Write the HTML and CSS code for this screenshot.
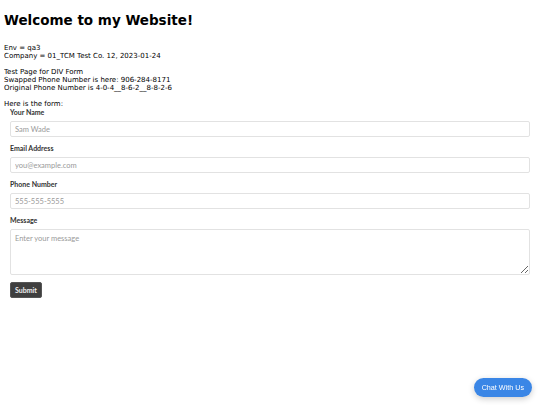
FILE: index.html
```html
<!DOCTYPE html>
<html lang="en">
  <head>
    <meta charset="UTF-8" />
    <meta name="viewport" content="width=device-width, initial-scale=1.0" />
    <title>Welcome</title>
    <link rel="stylesheet" href="styles.css">
  </head>
  <body>
    <h1>Welcome to my Website!</h1>

    <p>
      Env = qa3<br />
      Company = 01_TCM Test Co. 12, 2023-01-24
    </p>

    <p>
      Test Page for DIV Form<br />
      Swapped Phone Number is here: 906-284-8171<br />
      Original Phone Number is 4-0-4__8-6-2__8-8-2-6
    </p>

    <p class="intro">Here is the form:</p>

    <!-- Contact Form -->
    <div class="contact-form">
      <div class="form-group">
        <label for="name">Your Name</label>
        <input type="text" id="name" placeholder="Sam Wade" />
      </div>

      <div class="form-group">
        <label for="email">Email Address</label>
        <input type="email" id="email" placeholder="you@example.com" />
      </div>

      <div class="form-group">
        <label for="phone">Phone Number</label>
        <input type="tel" id="phone" placeholder="555-555-5555" />
      </div>

      <div class="form-group">
        <label for="message">Message</label>
        <textarea id="message" placeholder="Enter your message"></textarea>
      </div>

      <button class="button">Submit</button>
    </div>

    <button class="chat-button">Chat With Us</button>
  </body>
</html>
```

FILE: styles.css
```css
body {
  font-family: "DejaVu Sans", Verdana, sans-serif;
  font-size: 7px;
  line-height: 8px;
  margin: 4px;
  color: #000;
  background-color: #fff;
}
h1 {
  font-size: 13.5px;
  line-height: 16px;
  margin: 8px 0 16px;
}
p {
  margin: 0 0 8px;
}
p.intro {
  margin-bottom: 0;
}
.contact-form {
  font-family: Lato, "Open Sans", sans-serif;
  padding: 0 6px;
}
.form-group {
  margin-bottom: 7px;
}
.form-group label {
  display: block;
  font-size: 7px;
  line-height: 9px;
  font-weight: bold;
  color: #333;
  margin-bottom: 4px;
}
.form-group input,
.form-group textarea {
  display: block;
  width: 100%;
  height: 16px;
  box-sizing: border-box;
  padding: 0 4px;
  border: 1px solid #e2e2e2;
  border-radius: 2px;
  font-family: Lato, "Open Sans", sans-serif;
  font-size: 7.5px;
  color: #333;
}
.form-group textarea {
  height: 46px;
  padding: 4px;
  resize: vertical;
}
.form-group input::placeholder,
.form-group textarea::placeholder {
  color: #9a9a9a;
}
.button {
  display: block;
  height: 16px;
  padding: 0 4px;
  background-color: #3f3f3f;
  color: #f0f0f0;
  border: 1px solid #555;
  border-radius: 2px;
  font-family: Lato, "Open Sans", sans-serif;
  font-size: 7px;
  font-weight: bold;
  cursor: pointer;
}
.chat-button {
  position: fixed;
  right: 8px;
  bottom: 8px;
  height: 19px;
  padding: 0 8px;
  background-color: #3a86e6;
  color: white;
  border: none;
  border-radius: 10px;
  font-family: "Liberation Sans", Arial, sans-serif;
  font-size: 7.2px;
  box-shadow: 0 2px 6px rgba(0, 0, 0, 0.2);
  cursor: pointer;
}
```
